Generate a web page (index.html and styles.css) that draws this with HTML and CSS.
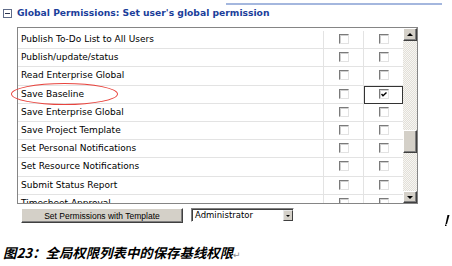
FILE: index.html
```html
<!DOCTYPE html>
<html>

<head>
    <title>Global Permissions</title>
    <link rel="stylesheet" href="styles.css">
</head>

<body>
    <div class="page">
        <div class="topline"></div>
        <div class="head">
            <span class="toggle"></span>
            <h3>Global Permissions: Set user's global permission</h3>
        </div>

        <div class="grid">
            <div class="rows">
                <div class="row">
                    <div class="name">Publish To-Do List to All Users</div>
                    <div class="cell"><span class="cb"></span></div>
                    <div class="cell last"><span class="cb"></span></div>
                </div>
                <div class="row">
                    <div class="name">Publish/update/status</div>
                    <div class="cell"><span class="cb"></span></div>
                    <div class="cell last"><span class="cb"></span></div>
                </div>
                <div class="row">
                    <div class="name">Read Enterprise Global</div>
                    <div class="cell"><span class="cb"></span></div>
                    <div class="cell last"><span class="cb"></span></div>
                </div>
                <div class="row">
                    <div class="name">Save Baseline</div>
                    <div class="cell"><span class="cb"></span></div>
                    <div class="cell last sel">
                        <span class="cb">
                            <svg width="6" height="5" viewBox="0 0 6 5"><polyline points="0.5,2 2,3.8 5.5,0.5" fill="none" stroke="#000" stroke-width="1.4" /></svg>
                        </span>
                    </div>
                </div>
                <div class="row">
                    <div class="name">Save Enterprise Global</div>
                    <div class="cell"><span class="cb"></span></div>
                    <div class="cell last"><span class="cb"></span></div>
                </div>
                <div class="row">
                    <div class="name">Save Project Template</div>
                    <div class="cell"><span class="cb"></span></div>
                    <div class="cell last"><span class="cb"></span></div>
                </div>
                <div class="row">
                    <div class="name">Set Personal Notifications</div>
                    <div class="cell"><span class="cb"></span></div>
                    <div class="cell last"><span class="cb"></span></div>
                </div>
                <div class="row">
                    <div class="name">Set Resource Notifications</div>
                    <div class="cell"><span class="cb"></span></div>
                    <div class="cell last"><span class="cb"></span></div>
                </div>
                <div class="row">
                    <div class="name">Submit Status Report</div>
                    <div class="cell"><span class="cb"></span></div>
                    <div class="cell last"><span class="cb"></span></div>
                </div>
                <div class="row">
                    <div class="name">Timesheet Approval</div>
                    <div class="cell"><span class="cb"></span></div>
                    <div class="cell last"><span class="cb"></span></div>
                </div>
            </div>
            <div class="scrollbar">
                <div class="sb-btn up"></div>
                <div class="sb-track"><div class="sb-thumb"></div></div>
                <div class="sb-btn down"></div>
            </div>
            <!-- 红色圈注 -->
            <div class="circle"></div>
        </div>

        <div class="actions">
            <button class="tpl-btn">Set Permissions with Template</button>
            <div class="select">
                <span class="select-text">Administrator</span>
                <span class="select-arrow"></span>
            </div>
            <svg class="cursor-mark" width="5" height="11" viewBox="0 0 5 11"><polygon points="2.5,0 4.5,0 2,9 0.5,9" fill="#000" /><rect x="0" y="9.5" width="1.5" height="1.5" fill="#000" /></svg>
        </div>

        <p class="caption">图23：全局权限列表中的保存基线权限<span class="para">↵</span></p>
    </div>
</body>

</html>
```

FILE: styles.css
```css
body {
    margin: 0;
    background: #ffffff;
    font-family: "DejaVu Sans", Verdana, sans-serif;
    color: #000000;
}

.page {
    width: 452px;
    padding-top: 3px;
}

.topline {
    margin-left: 226px;
    width: 216px;
    height: 2px;
    background: #a4b7de;
}

.head {
    display: flex;
    align-items: center;
    gap: 5px;
    height: 12px;
    margin-top: 2px;
    padding-left: 3px;
}

.toggle {
    width: 9px;
    height: 9px;
    box-sizing: border-box;
    border: 1px solid #5f6b88;
    display: flex;
    align-items: center;
    justify-content: center;
}

.toggle:after {
    content: "";
    width: 5px;
    height: 1px;
    background: #2b3350;
}

h3 {
    margin: 0;
    font-size: 9.2px;
    font-weight: bold;
    color: #1b3e9a;
    line-height: 12px;
    white-space: nowrap;
}

/* 权限列表 */
.grid {
    position: relative;
    display: flex;
    margin: 8px 0 0 17px;
    width: 401px;
    height: 177px;
    box-sizing: border-box;
    border: 1px solid #858585;
}

.rows {
    width: 385px;
    overflow: hidden;
    padding-top: 3px;
}

.row {
    display: flex;
    height: 18.2px;
    box-sizing: border-box;
    border-bottom: 1px solid #e3e3e3;
}

.name {
    width: 306px;
    box-sizing: border-box;
    border-right: 1px solid #e3e3e3;
    padding-left: 3px;
    font-size: 9px;
    line-height: 17px;
    white-space: nowrap;
}

.cell {
    width: 40px;
    box-sizing: border-box;
    border-right: 1px solid #e3e3e3;
    display: flex;
    align-items: center;
    justify-content: center;
}

.cell.last {
    width: 39px;
    border-right: none;
}

.cell.sel {
    margin-bottom: -1px;
    box-shadow: inset 0 0 0 1px #333333;
}

.cb {
    width: 10px;
    height: 10px;
    margin-bottom: 1px;
    box-sizing: border-box;
    border: 1px solid;
    border-color: #7a7a7a #e2e2e2 #e2e2e2 #7a7a7a;
    box-shadow: inset 1px 1px 0 #d0d0d0;
    background: #ffffff;
    display: flex;
    align-items: center;
    justify-content: center;
}

.scrollbar {
    width: 14px;
    display: flex;
    flex-direction: column;
}

.sb-btn {
    height: 13px;
    box-sizing: border-box;
    background: #d4d0c8;
    border: 1px solid;
    border-color: #ffffff #404040 #404040 #ffffff;
    box-shadow: inset -1px -1px 0 #808080;
    display: flex;
    align-items: center;
    justify-content: center;
}

.sb-btn.down {
    height: 12px;
}

.sb-btn:after {
    content: "";
    width: 0;
    height: 0;
    border-left: 3px solid transparent;
    border-right: 3px solid transparent;
}

.sb-btn.up:after {
    border-bottom: 3px solid #000000;
}

.sb-btn.down:after {
    border-top: 3px solid #000000;
}

.sb-track {
    flex: 1;
    background: repeating-conic-gradient(#e2dfd8 0 25%, #f7f6f3 0 50%) 0 0 / 2px 2px;
}

.sb-thumb {
    margin-top: 89px;
    height: 23px;
    box-sizing: border-box;
    background: #d4d0c8;
    border: 1px solid;
    border-color: #ffffff #404040 #404040 #ffffff;
    box-shadow: inset -1px -1px 0 #808080;
}

.circle {
    position: absolute;
    left: -7px;
    top: 55px;
    width: 107px;
    height: 22px;
    box-sizing: border-box;
    border: 1px solid #e8443e;
    border-radius: 50%;
}

/* 模板按钮与下拉框 */
.actions {
    display: flex;
    align-items: flex-start;
    width: 427px;
    height: 15px;
    margin: 4px 0 0 21px;
}

.tpl-btn {
    width: 162px;
    height: 15px;
    margin: 0;
    padding: 0;
    font-family: "Liberation Sans", Arial, sans-serif;
    font-size: 8.5px;
    color: #000000;
    background: #d4d0c8;
    border: 1px solid;
    border-color: #ffffff #404040 #404040 #ffffff;
    box-shadow: inset -1px -1px 0 #808080;
}

.select {
    margin-left: 8px;
    width: 103px;
    height: 14px;
    box-sizing: border-box;
    border: 1px solid;
    border-color: #808080 #ffffff #ffffff #808080;
    box-shadow: inset 1px 1px 0 #404040;
    background: #ffffff;
    display: flex;
    align-items: center;
    padding: 1px 0 0 3px;
}

.select-text {
    font-size: 8.5px;
    line-height: 11px;
}

.select-arrow {
    margin-left: auto;
    width: 10px;
    height: 11px;
    box-sizing: border-box;
    background: #d4d0c8;
    border: 1px solid;
    border-color: #e8e8e8 #404040 #404040 #e8e8e8;
    display: flex;
    align-items: center;
    justify-content: center;
}

.select-arrow:after {
    content: "";
    border-left: 2px solid transparent;
    border-right: 2px solid transparent;
    border-top: 2px solid #000000;
}

.cursor-mark {
    margin-left: auto;
    margin-right: -2px;
    margin-top: 7px;
}

.caption {
    margin: 21px 0 0 3px;
    font-family: "Noto Sans CJK SC", sans-serif;
    font-size: 13.4px;
    font-weight: bold;
    font-style: italic;
    line-height: 16px;
    white-space: nowrap;
}

.para {
    font-family: "DejaVu Sans", sans-serif;
    font-style: normal;
    font-weight: normal;
    font-size: 9px;
    color: #8a8a8a;
}
```
